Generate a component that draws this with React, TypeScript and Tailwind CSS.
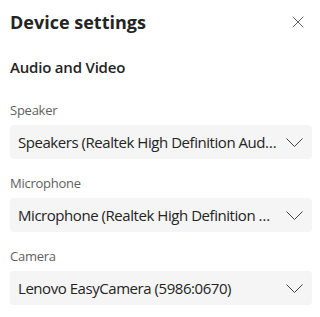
import { X } from "lucide-react";

interface Device {
  label: string;
  value: string;
}

const devices: Device[] = [
  { label: "Speaker", value: "Speakers (Realtek High Definition Audio)" },
  { label: "Microphone", value: "Microphone (Realtek High Definition Audio)" },
  { label: "Camera", value: "Lenovo EasyCamera (5986:0670)" },
];

const Chevron = () => (
  <svg width="17" height="9" viewBox="0 0 17 9" fill="none" className="shrink-0">
    <path d="M0.5 0.5L8.5 8.5L16.5 0.5" stroke="#424242" strokeWidth="1" />
  </svg>
);

const DeviceSelect = ({ device }: { device: Device }) => (
  <div className="flex flex-col">
    <label className="text-[13px] leading-[18px] tracking-[-0.25px] text-[#616161] mb-[6px]">
      {device.label}
    </label>
    <div className="flex items-center h-[34px] rounded-[4px] bg-[#f5f5f5] pl-[8px] pr-[9px] gap-[8px]">
      <span className="flex-1 truncate text-[15px] leading-[20px] tracking-[-0.45px] text-[#242424]">
        {device.value}
      </span>
      <Chevron />
    </div>
  </div>
);

export default function App() {
  return (
    <div
      className="w-[320px] h-[317px] bg-white px-[10px] pr-[8px]"
      style={{ fontFamily: '"Open Sans", "Noto Sans", sans-serif' }}
    >
      {/* Header */}
      <div className="flex items-center justify-between pt-[8px] h-[36px]">
        <h1 className="text-[18px] leading-[28px] font-bold text-[#242424]">
          Device settings
        </h1>
        <button className="w-[24px] h-[24px] flex items-center justify-center text-[#616161] mr-[2px]">
          <X className="w-[20px] h-[20px]" strokeWidth={1.2} />
        </button>
      </div>

      <h2 className="mt-[20px] text-[15px] leading-[22px] tracking-[-0.2px] font-semibold text-[#242424]">
        Audio and Video
      </h2>

      <div className="mt-[23px] flex flex-col gap-[15px]">
        {devices.map((d) => (
          <DeviceSelect key={d.label} device={d} />
        ))}
      </div>
    </div>
  );
}
